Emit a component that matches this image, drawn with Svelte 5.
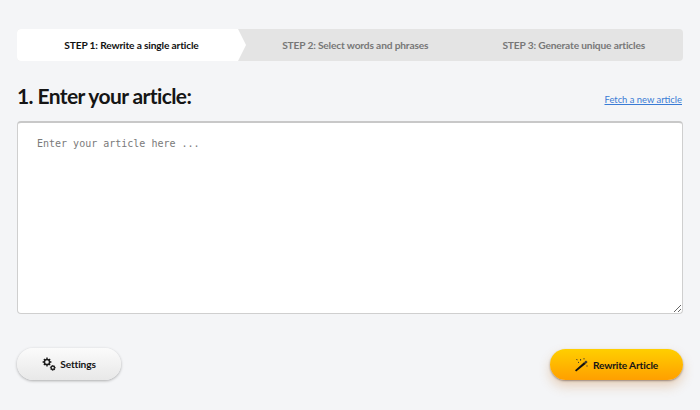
<script lang="ts">
	let steps = [
		'STEP 1: Rewrite a single article',
		'STEP 2: Select words and phrases',
		'STEP 3: Generate unique articles'
	];
	let article = '';
</script>

<div id="page">
	<div id="steps">
		{#each steps as step, index}
			<div class="step" class:active={index === 0}>{step}</div>
		{/each}
	</div>

	<div id="title-row">
		<h1>1. Enter your article:</h1>
		<a href="#fetch">Fetch a new article</a>
	</div>

	<textarea bind:value={article} placeholder="Enter your article here ..."></textarea>

	<div id="actions">
		<button class="settings">
			<svg width="14" height="14" viewBox="0 0 14 14">
				<g fill="none" stroke="#1a1a1a">
					<circle cx="5" cy="5" r="2.6" stroke-width="1.5" />
					<path d="M5 0.6v1.4M5 8v1.4M0.6 5h1.4M8 5h1.4M1.9 1.9l1 1M7.1 7.1l1 1M1.9 8.1l1-1M7.1 2.9l1-1" stroke-width="1.4" />
					<circle cx="10.8" cy="10.8" r="1.7" stroke-width="1.3" />
					<path d="M10.8 7.9v1M10.8 12.7v1M7.9 10.8h1M12.7 10.8h1M8.8 8.8l.7.7M12.1 12.1l.7.7M8.8 12.8l.7-.7M12.1 9.5l.7-.7" stroke-width="1.1" />
				</g>
			</svg>
			Settings
		</button>
		<button class="rewrite">
			<svg width="13" height="14" viewBox="0 0 13 14">
				<path d="M1.2 13.6L0 12.2 9 4.2l1.6 1.7z" fill="#111" />
				<path d="M9 4.2l2-1.8 1.6 1.7-2 1.8z" fill="#333" />
				<path d="M1.6 1l.6 1.2M5.6 1v1.6M9 .2v1.2M12 7.4v1.2M3 4.4h1" stroke="#333" stroke-width="1" fill="none" />
			</svg>
			Rewrite Article
		</button>
	</div>
</div>

<style>
	:global(body) {
		background-color: #f4f5f7;
	}
	#page {
		box-sizing: border-box;
		width: 700px;
		height: 410px;
		padding: 29px 17px 0 17px;
		font-family: 'Lato', 'Noto Sans', sans-serif;
		overflow: hidden;
	}
	#steps {
		display: flex;
		height: 32px;
		background-color: #e4e4e4;
		border-radius: 4px;
	}
	.step {
		flex: 1;
		display: flex;
		align-items: center;
		justify-content: center;
		font-size: 10.2px;
		font-weight: 700;
		letter-spacing: -0.16px;
		color: #777;
	}
	.active {
		flex: 0 0 229px;
		color: #111;
		background-color: #fff;
		border-radius: 4px 0 0 4px;
		clip-path: polygon(0 0, 221px 0, 100% 50%, 221px 100%, 0 100%);
	}
	#title-row {
		box-sizing: border-box;
		display: flex;
		justify-content: space-between;
		align-items: center;
		margin-top: 22px;
		height: 38px;
		padding: 0 1px 6px 0;
	}
	h1 {
		margin: 0 0 8px;
		font-size: 21px;
		font-weight: 700;
		letter-spacing: -0.6px;
		color: #151515;
	}
	a {
		font-size: 9.4px;
		color: #3a7bd5;
	}
	textarea {
		display: block;
		box-sizing: border-box;
		width: 100%;
		height: 193px;
		padding: 15px 19px;
		border: 1px solid #cfcfcf;
		border-top: 2px solid #c8c8c8;
		border-radius: 4px;
		background-color: #fff;
		font-family: 'DejaVu Sans Mono', monospace;
		font-size: 10px;
		outline: none;
	}
	textarea::placeholder {
		color: #7a7a7a;
		opacity: 1;
	}
	#actions {
		display: flex;
		justify-content: space-between;
		align-items: flex-start;
		margin-top: 34px;
	}
	button {
		display: flex;
		align-items: center;
		justify-content: center;
		gap: 4px;
		border: none;
		border-radius: 16px;
		font-family: inherit;
		font-size: 10.2px;
		font-weight: 700;
		letter-spacing: -0.16px;
		color: #151515;
	}
	.settings {
		width: 104px;
		height: 32px;
		background: linear-gradient(#fbfbfb, #e8e8e8);
		box-shadow: 0 1px 3px rgba(0, 0, 0, 0.3);
	}
	.rewrite {
		width: 133px;
		height: 31px;
		margin-top: 1px;
		gap: 5px;
		background: linear-gradient(#ffcf00, #ff9f00);
		box-shadow: 0 1px 2px rgba(90, 70, 60, 0.55), 0 6px 12px rgba(200, 120, 40, 0.3);
	}
</style>
